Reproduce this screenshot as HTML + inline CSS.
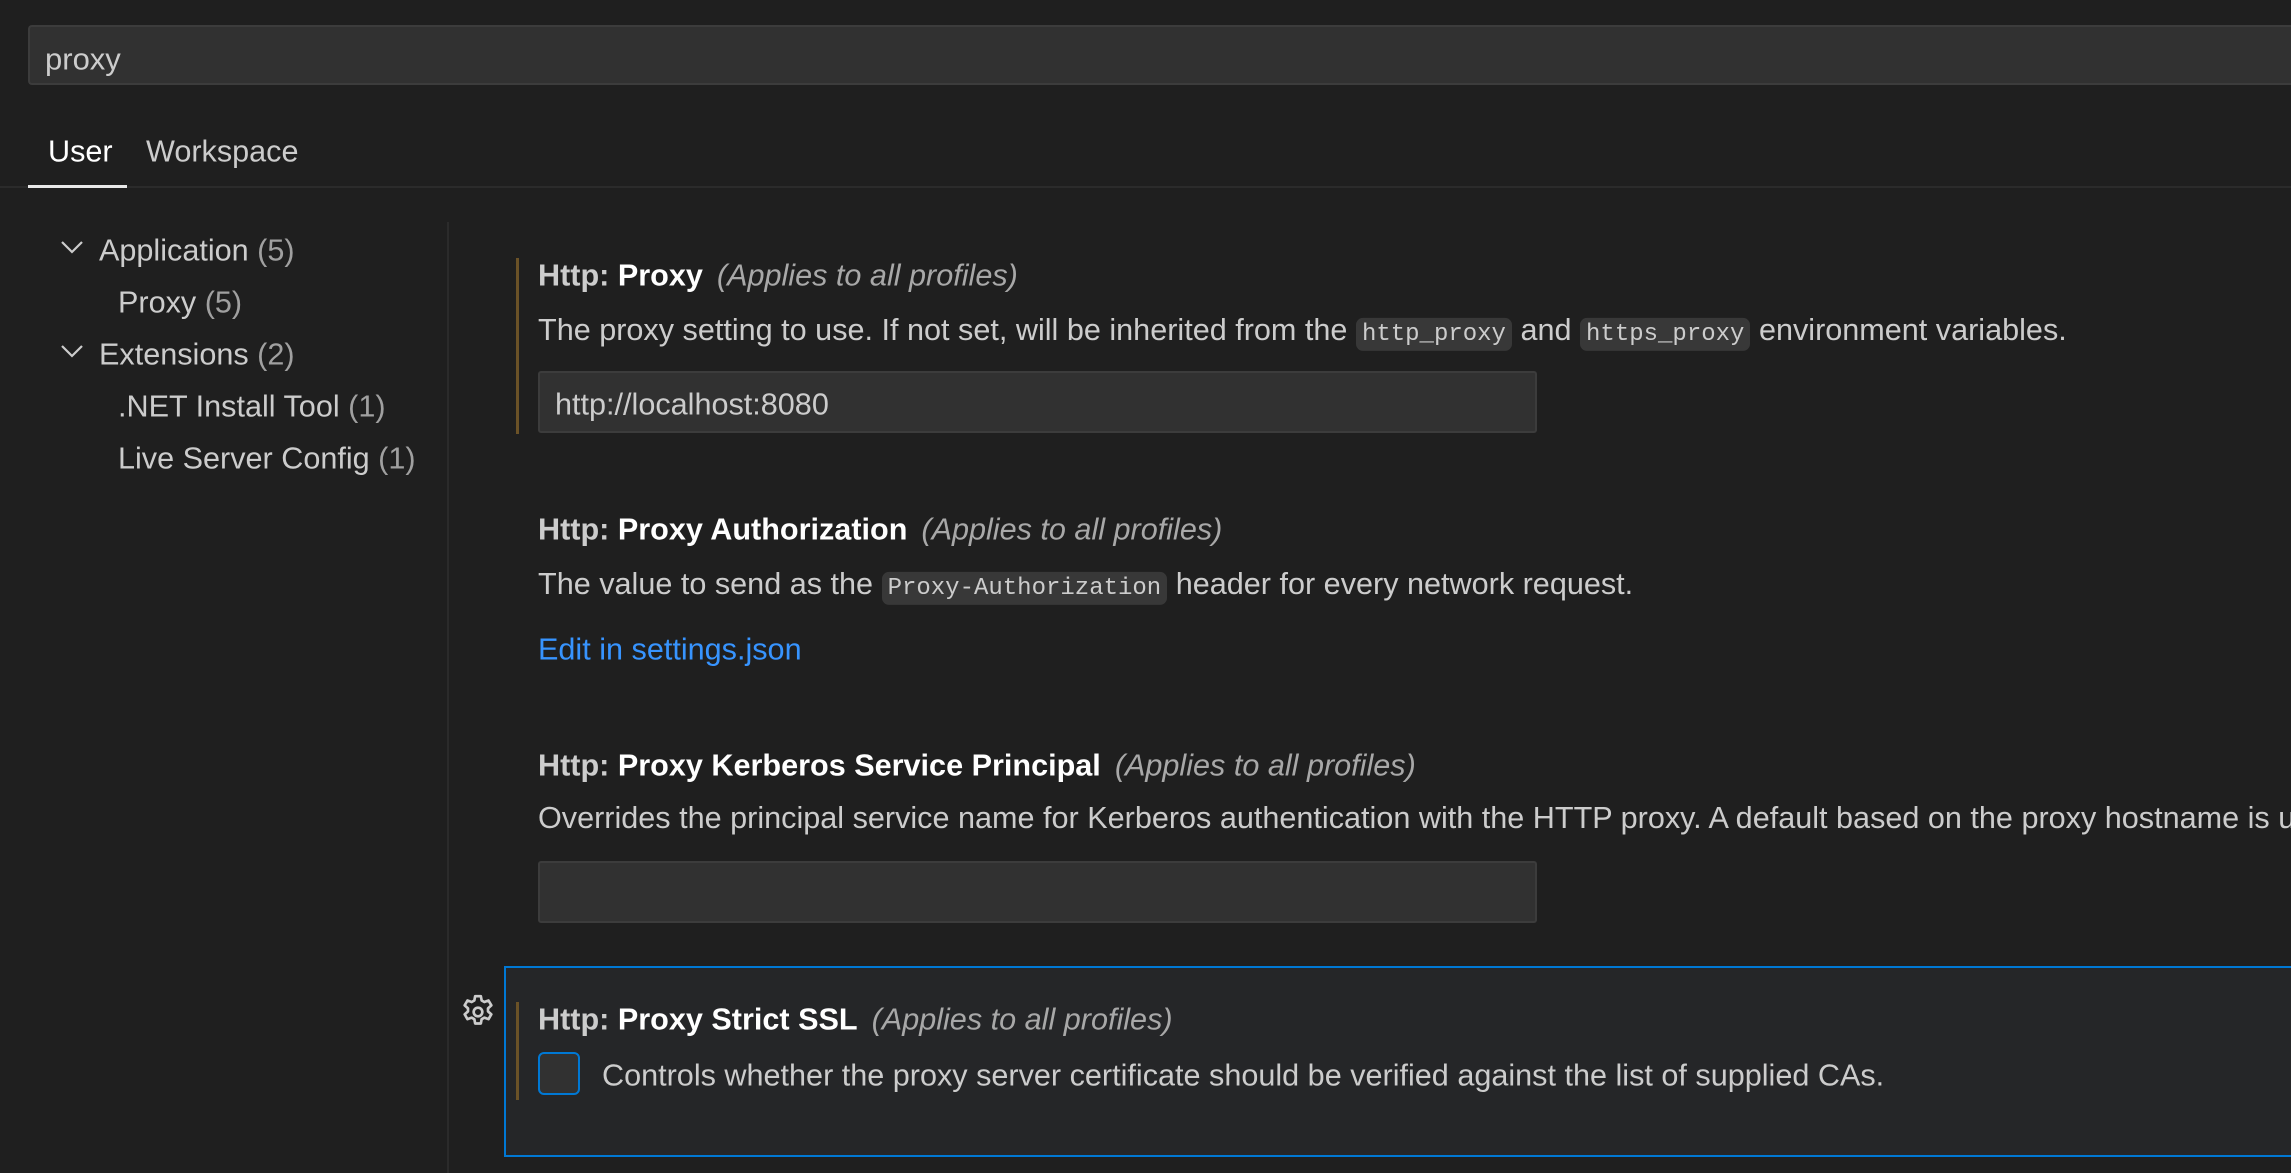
<!DOCTYPE html>
<html><head><meta charset="utf-8"><style>
*{margin:0;padding:0;box-sizing:border-box}
html,body{width:2291px;height:1173px;overflow:hidden}
body{background:#1f1f1f;position:relative;font-family:"Liberation Sans",sans-serif;color:#cccccc;font-size:30.6px}
#clip{position:absolute;left:0;top:0;width:2291px;height:1173px;overflow:hidden}
.a{position:absolute;white-space:nowrap}
.search{left:28px;top:25px;width:2263px;height:60px;background:#313131;border:2px solid #3c3c3c;border-right:none;border-radius:4px 0 0 4px}
.t{line-height:1;transform:translateY(-44%)}
.title b{color:#fff;font-weight:bold}
.title .h{font-weight:bold;color:#cccccc}
.title i{color:#a8a8a8;margin-left:14px}
.code{font-family:"Liberation Mono",monospace;font-size:24px;background:#383838;border-radius:7px;padding:3px 6px;color:#cccccc}
.inp{background:#313131;border:2px solid #3c3c3c;border-radius:3px}
.bar{width:3px;background:#6b5227}
</style></head><body><div id="clip">
<div class="a search"></div>
<div class="a t" style="left:45px;top:57px;font-size:31px;color:#cccccc">proxy</div>

<div class="a t" style="left:48px;top:150px;color:#ffffff">User</div>
<div class="a t" style="left:146px;top:150px;color:#cccccc">Workspace</div>
<div class="a" style="left:0;top:186px;width:2291px;height:2px;background:#2b2b2b"></div>
<div class="a" style="left:28px;top:185px;width:99px;height:3px;background:#e8e8e8"></div>

<svg class="a" style="left:60px;top:238px" width="24" height="20" viewBox="0 0 24 20"><path d="M2 4 L12 14 L22 4" fill="none" stroke="#cccccc" stroke-width="2.2"/></svg>
<div class="a t" style="left:99px;top:249px">Application <span style="color:#a0a0a0">(5)</span></div>
<div class="a t" style="left:118px;top:301px">Proxy <span style="color:#a0a0a0">(5)</span></div>
<svg class="a" style="left:60px;top:342px" width="24" height="20" viewBox="0 0 24 20"><path d="M2 4 L12 14 L22 4" fill="none" stroke="#cccccc" stroke-width="2.2"/></svg>
<div class="a t" style="left:99px;top:353px">Extensions <span style="color:#a0a0a0">(2)</span></div>
<div class="a t" style="left:118px;top:405px">.NET Install Tool <span style="color:#a0a0a0">(1)</span></div>
<div class="a t" style="left:118px;top:457px">Live Server Config <span style="color:#a0a0a0">(1)</span></div>
<div class="a" style="left:447px;top:222px;width:2px;height:951px;background:#2b2b2b"></div>

<div class="a bar" style="left:516px;top:258px;height:176px"></div>
<div class="a t title" style="left:538px;top:274px"><span class="h">Http: </span><b>Proxy</b><i>(Applies to all profiles)</i></div>
<div class="a t" style="left:538px;top:329px">The proxy setting to use. If not set, will be inherited from the <span class="code">http_proxy</span> and <span class="code">https_proxy</span> environment variables.</div>
<div class="a inp" style="left:538px;top:371px;width:999px;height:62px"></div>
<div class="a t" style="left:555px;top:403px">http://localhost:8080</div>

<div class="a t title" style="left:538px;top:528px"><span class="h">Http: </span><b>Proxy Authorization</b><i>(Applies to all profiles)</i></div>
<div class="a t" style="left:538px;top:583px">The value to send as the <span class="code">Proxy-Authorization</span> header for every network request.</div>
<div class="a t" style="left:538px;top:648px;color:#3794ff">Edit in settings.json</div>

<div class="a t title" style="left:538px;top:764px"><span class="h">Http: </span><b>Proxy Kerberos Service Principal</b><i>(Applies to all profiles)</i></div>
<div class="a" style="left:538px;top:800px;width:1753px;height:40px;overflow:hidden"><div class="a" style="left:0;top:3px;line-height:1">Overrides the principal service name for Kerberos authentication with the HTTP proxy. A default based on the proxy hostname is used when this is not set.</div></div>
<div class="a inp" style="left:538px;top:861px;width:999px;height:62px"></div>

<div class="a" style="left:504px;top:966px;width:1787px;height:191px;background:#252628;border:2px solid #0078d4;border-right:none"></div>
<svg class="a" style="left:458px;top:992px" width="40" height="40" viewBox="0 0 24 24"><path d="M10.3 2.5h3.4l.5 2.6 1.6.9 2.5-.9 1.7 2.9-2 1.8v1.8l2 1.8-1.7 2.9-2.5-.9-1.6.9-.5 2.6h-3.4l-.5-2.6-1.6-.9-2.5.9-1.7-2.9 2-1.8v-1.8l-2-1.8 1.7-2.9 2.5.9 1.6-.9z" fill="none" stroke="#cccccc" stroke-width="1.6" stroke-linejoin="round"/><circle cx="12" cy="12" r="2.6" fill="none" stroke="#cccccc" stroke-width="1.6"/></svg>
<div class="a bar" style="left:516px;top:1002px;height:98px"></div>
<div class="a t title" style="left:538px;top:1018px"><span class="h">Http: </span><b>Proxy Strict SSL</b><i>(Applies to all profiles)</i></div>
<div class="a" style="left:538px;top:1052px;width:42px;height:43px;background:#313131;border:2px solid #0078d4;border-radius:6px"></div>
<div class="a t" style="left:602px;top:1074px">Controls whether the proxy server certificate should be verified against the list of supplied CAs.</div>
</div></body></html>
